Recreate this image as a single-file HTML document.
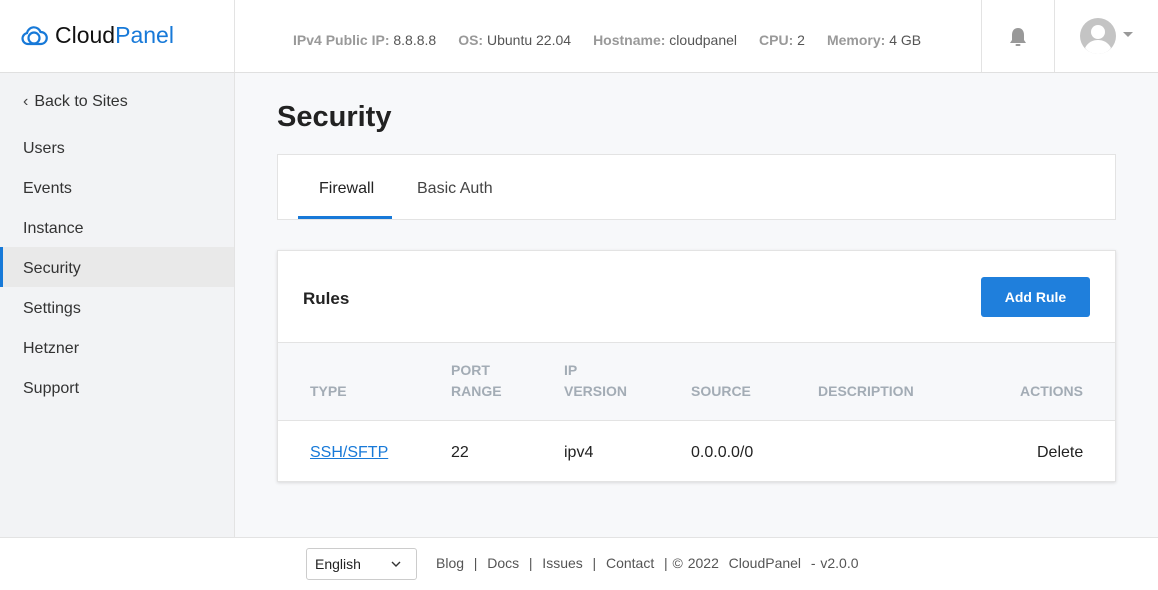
<!DOCTYPE html>
<html><head><meta charset="utf-8"><style>
*{box-sizing:border-box;margin:0;padding:0}
body{width:1158px;height:590px;overflow:hidden;font-family:"Liberation Sans",sans-serif;background:#f7f8fa;position:relative;color:#222}
.hdr{position:absolute;left:0;top:0;width:1158px;height:73px;background:#fff;border-bottom:1px solid #e0e0e0}
.logo{position:absolute;left:20px;top:22px;display:flex;align-items:center;font-size:23px}
.vl{position:absolute;top:0;width:1px;height:72px;background:#e3e3e3}
.info{position:absolute;left:293px;top:32px;font-size:14px;color:#999;font-weight:bold}
.info span{color:#555;font-weight:normal;margin-right:22px}
.side{position:absolute;left:0;top:73px;width:235px;height:464px;background:#f2f3f5;border-right:1px solid #e3e3e3}
.si{position:absolute;left:23px;font-size:16px;color:#333}
.sel{position:absolute;left:0;top:174px;width:234px;height:40px;background:#e9e9e9;border-left:3px solid #1779d8}
h1{position:absolute;left:277px;top:101px;font-size:29px;font-weight:bold;color:#222}
.tabs{position:absolute;left:277px;top:154px;width:839px;height:66px;background:#fff;border:1px solid #e3e3e3}
.card{position:absolute;left:277px;top:250px;width:839px;height:232px;background:#fff;border:1px solid #e3e3e3;box-shadow:0 1px 3px rgba(0,0,0,.12)}
.th{position:absolute;font-size:14px;font-weight:bold;color:#a3acb5;line-height:21px}
.td{position:absolute;top:444px;font-size:16px;color:#222}
.foot{position:absolute;left:0;top:537px;width:1158px;height:53px;background:#fff;border-top:1px solid #e3e3e3}
</style></head><body>
<div class="hdr">
 <div class="logo"><svg width="28" height="26" viewBox="0 0 28 26" fill="none" stroke="#1779d8" stroke-width="2.2"><path d="M8 21a5.5 5.5 0 0 1-1-10.9A7 7 0 0 1 20.5 9 6 6 0 0 1 21 21z"/><circle cx="14" cy="15" r="5.5"/></svg><span style="margin-left:7px;color:#111">Cloud</span><span style="color:#1779d8">Panel</span></div>
 <div class="vl" style="left:234px"></div>
 <div class="info">IPv4 Public IP: <span>8.8.8.8</span>OS: <span>Ubuntu 22.04</span>Hostname: <span>cloudpanel</span>CPU: <span>2</span>Memory: <span>4 GB</span></div>
 <div class="vl" style="left:981px"></div>
 <div class="vl" style="left:1054px"></div>
 <svg style="position:absolute;left:1007px;top:26px" width="22" height="22" viewBox="0 0 22 22"><path d="M11 2c-4 0-6 3-6 7v5l-2 3h16l-2-3V9c0-4-2-7-6-7z" fill="#999"/><rect x="8.5" y="18" width="5" height="2" rx="1" fill="#999"/></svg>
 <svg style="position:absolute;left:1080px;top:18px" width="36" height="36" viewBox="0 0 36 36"><circle cx="18" cy="18" r="18" fill="#c4c4c4"/><circle cx="18" cy="14" r="7" fill="#fff"/><path d="M5 30c3-6 8-8 13-8s10 2 13 8c-3 4-8 6-13 6s-10-2-13-6z" fill="#fff"/></svg>
 <div style="position:absolute;left:1123px;top:32px;border-left:5px solid transparent;border-right:5px solid transparent;border-top:5px solid #999"></div>
</div>
<div class="side">
 <div class="sel"></div>
 <div class="si" style="top:20px"><span style="color:#444;margin-right:6px">&#8249;</span>Back to Sites</div>
 <div class="si" style="top:67px">Users</div><div class="si" style="top:107px">Events</div><div class="si" style="top:147px">Instance</div><div class="si" style="top:187px">Security</div><div class="si" style="top:227px">Settings</div><div class="si" style="top:267px">Hetzner</div><div class="si" style="top:307px">Support</div>
</div>
<h1>Security</h1>
<div class="tabs">
 <div style="position:absolute;left:41px;top:25px;font-size:16px;color:#222">Firewall</div>
 <div style="position:absolute;left:20px;top:61px;width:94px;height:3px;background:#1779d8"></div>
 <div style="position:absolute;left:139px;top:25px;font-size:16px;color:#444">Basic Auth</div>
</div>
<div class="card">
 <div style="position:absolute;left:25px;top:38px;font-size:17px;font-weight:bold">Rules</div>
 <div style="position:absolute;left:703px;top:26px;width:109px;height:40px;background:#1f7fdc;border-radius:3px;color:#fff;font-size:14px;font-weight:bold;text-align:center;line-height:40px">Add Rule</div>
 <div style="position:absolute;left:0;top:91px;width:837px;height:79px;background:#f7f8fa;border-top:1px solid #e3e3e3;border-bottom:1px solid #e3e3e3"></div>
</div>
<div class="th" style="left:310px;top:381px">TYPE</div>
<div class="th" style="left:451px;top:360px">PORT<br>RANGE</div>
<div class="th" style="left:564px;top:360px">IP<br>VERSION</div>
<div class="th" style="left:691px;top:381px">SOURCE</div>
<div class="th" style="left:818px;top:381px">DESCRIPTION</div>
<div class="th" style="left:1020px;top:381px">ACTIONS</div>
<div class="td" style="left:310px;color:#1779d8;text-decoration:underline">SSH/SFTP</div>
<div class="td" style="left:451px">22</div>
<div class="td" style="left:564px">ipv4</div>
<div class="td" style="left:691px">0.0.0.0/0</div>
<div class="td" style="left:1037px">Delete</div>
<div class="foot">
 <div style="position:absolute;left:306px;top:10px;width:111px;height:32px;border:1px solid #ccc;border-radius:3px;font-size:14px;padding:7px 8px;color:#222">English<svg style="position:absolute;left:84px;top:12px" width="10" height="7" viewBox="0 0 10 7"><path d="M1 1l4 4 4-4" fill="none" stroke="#333" stroke-width="1.4"/></svg></div>
 <div style="position:absolute;left:436px;top:17px;font-size:14px;color:#555;white-space:pre;word-spacing:1px">Blog  |  Docs  |  Issues  |  Contact  | © 2022  CloudPanel  - v2.0.0</div>
</div>
</body></html>
